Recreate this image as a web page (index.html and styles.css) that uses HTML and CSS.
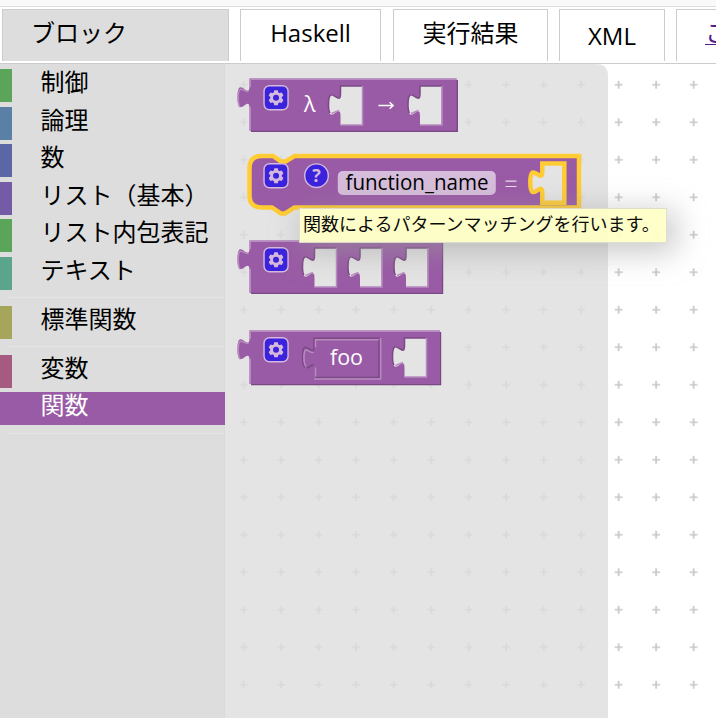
FILE: index.html
```html
<!DOCTYPE html>
<html lang="ja">
<head>
<meta charset="utf-8">
<title>ブロック</title>
<link rel="stylesheet" href="styles.css">
</head>
<body>
<div class="topbar"></div>
<nav class="tabs">
  <div class="tab active"><span>ブロック</span></div>
  <div class="tab haskell"><span>Haskell</span></div>
  <div class="tab result"><span>実行結果</span></div>
  <div class="tab xml"><span>XML</span></div>
  <div class="tab help"><a href="#">こ</a></div>
</nav>
<main class="editor">
  <aside class="toolbox">
    <div class="row c1">制御</div>
    <div class="row c2">論理</div>
    <div class="row c3">数</div>
    <div class="row c4">リスト（基本）</div>
    <div class="row c5">リスト内包表記</div>
    <div class="row c6">テキスト</div>
    <div class="separator"></div>
    <div class="row c7">標準関数</div>
    <div class="separator"></div>
    <div class="row c8">変数</div>
    <div class="row selected">関数</div>
    <div class="separator"></div>
  </aside>
  <svg class="workspace" width="491" height="655" viewBox="225 63 491 655">
    <defs>
      <pattern id="grid" x="262.4" y="66" width="37.5" height="37.5" patternUnits="userSpaceOnUse">
        <path d="M14.75 18.75h8M18.75 14.75v8" stroke="#c8c8c8" stroke-width="1.7"/>
      </pattern>
      <g id="gear">
        <rect x=".75" y=".75" width="24" height="24" rx="5.5" fill="#3b22dd" stroke="#d5b9dc" stroke-width="1.4"/>
        <g fill="#d5b9dc">
          <path id="teeth" d="M11 5.2h3.5l.9 3.8h-5.3zM10.1 16.5h5.3l-.9 3.8H11z"/>
          <use href="#teeth" transform="rotate(60 12.75 12.75)"/>
          <use href="#teeth" transform="rotate(120 12.75 12.75)"/>
        </g>
        <circle cx="12.75" cy="12.75" r="4.4" fill="none" stroke="#d5b9dc" stroke-width="2.8"/>
      </g>
      <g id="socket">
        <path d="M0 0H21.5V39H0V30C0 15-12 42-12 18.75S0 22.5 0 7.5Z" fill="#e4e4e4"/>
        <path d="M21.5 0H0V7.5C0 22.5-12-4.5-12 18.75Q-12 25-10.5 27" class="dark"/>
        <path d="M22 0V39H0M-9 27.5L-1.5 24.5" class="light"/>
      </g>
      <path id="tab-edge" d="M-1 12.5C-4 15.5-11.3 3-11.3 18.75Q-11.3 26-9.5 28.5" class="light"/>
    </defs>
    <rect x="225" y="63" width="491" height="655" fill="#fff"/>
    <rect x="225" y="63" width="491" height="655" fill="url(#grid)"/>
    <path d="M225 64H596Q608 64 608 76V718H225Z" fill="#ddd" fill-opacity=".8"/>
    <path d="M225 63.5H716" stroke="#ccc"/>

    <g>
      <path class="shadow" d="M251 80H458V132H251Z"/>
      <path class="block" d="M249.5 78.5H456.5V130.7H249.5V108.5C249.5 93.5 237.5 120.5 237.5 97.25S249.5 101 249.5 86Z"/>
      <path class="light" d="M456.5 79.2H250.2V87M250.2 107V130.5"/>
      <use href="#tab-edge" x="249.5" y="78.5"/>
      <use href="#gear" x="263.3" y="85"/>
      <text x="304" y="111.5" class="label lambda">λ</text>
      <use href="#socket" x="340.5" y="86"/>
      <path class="arrow" d="M378.5 105.5H393M389.6 102.2L393.2 105.5L389.6 108.8"/>
      <use href="#socket" x="420" y="86"/>
    </g>

    <g>
      <path class="block selected-block" d="M249.5 168Q249.5 156 261.5 156H273L281 161.5H285.5L294.5 156H579V207.5H294.5L285 213.5H281L272 207.5H261.5Q249.5 207.5 249.5 195.5Z"/>
      <use href="#gear" x="263.3" y="163"/>
      <circle cx="316.5" cy="175.7" r="11.8" fill="#3b22dd" stroke="#d5b9dc" stroke-width="1.4"/>
      <text x="312.2" y="182" class="question">?</text>
      <rect x="337.8" y="171" width="158" height="24" rx="5" fill="#d6bddb"/>
      <text x="345.5" y="189.5" class="label field" textLength="143" lengthAdjust="spacingAndGlyphs">function_name</text>
      <path d="M505.5 181.1H516.5M505.5 186.5H516.5" stroke="#e9dded" stroke-width="1.2"/>
      <path d="M542.3 163.5H564.3V202.7H542.3V193.5C542.3 178.5 530.3 205.5 530.3 182.25S542.3 186 542.3 171Z" fill="#e4e4e4" stroke="#fc3" stroke-width="4.5"/>
    </g>

    <g>
      <path class="shadow" d="M251 242H443.2V294H251Z"/>
      <path class="block" d="M249.5 240.5H442V292.7H249.5V270.5C249.5 255.5 237.5 282.5 237.5 259.25S249.5 263 249.5 248Z"/>
      <path class="light" d="M442 241.2H250.2V249M250.2 269V292.5"/>
      <use href="#tab-edge" x="249.5" y="240.5"/>
      <use href="#gear" x="263.3" y="247"/>
      <use href="#socket" x="314.5" y="248"/>
      <use href="#socket" x="360" y="248"/>
      <use href="#socket" x="406" y="248"/>
    </g>

    <g>
      <path class="shadow" d="M251 332H441.2V385.2H251Z"/>
      <path class="block" d="M249.5 330.5H440V384H249.5V360.5C249.5 345.5 237.5 372.5 237.5 349.25S249.5 353 249.5 338Z"/>
      <path class="light" d="M440 331.2H250.2V339M250.2 359V383.5"/>
      <use href="#tab-edge" x="249.5" y="330.5"/>
      <use href="#gear" x="263.3" y="337"/>
      <path class="dark" d="M379.5 338.2H314V346C314 361 302.5 334 302.5 357Q302.5 365 305 367.5M307 368L313.5 364.5M379 340V377.5H316"/>
      <path class="light" d="M378.5 339.7H315.5V347.5M315.5 367.5V376.5M380.7 338V379H314M313.5 352C310 355.5 304 342 304 358Q304 364 306 366.5"/>
      <text x="330" y="364.8" class="label" textLength="33" lengthAdjust="spacingAndGlyphs">foo</text>
      <use href="#socket" x="404.5" y="338"/>
    </g>
  </svg>
</main>
<div class="tooltip"><span>関数によるパターンマッチングを行います。</span></div>
</body>
</html>
```

FILE: styles.css
```css
* { box-sizing: border-box; }
body {
  margin: 0;
  width: 716px;
  height: 718px;
  overflow: hidden;
  position: relative;
  background: #fff;
  color: #000;
  font-family: "Open Sans", "Noto Sans CJK JP", sans-serif;
  font-size: 24px;
}
.topbar { height: 7px; background: #f9f9f9; border-bottom: 1px solid #ddd; }
.tabs { display: flex; height: 56px; padding: 2px 0 2px 2px; }
.tab {
  flex: none;
  height: 52px;
  border: 1px solid #ccc;
  border-bottom: 0;
  text-align: center;
  line-height: 45px;
  white-space: nowrap;
  margin-right: 11px;
}
.tab.active { width: 227px; background: #ddd; text-align: left; padding-left: 28px; }
.tab.haskell { width: 141px; margin-right: 12px; }
.tab.result { width: 155px; }
.tab.xml { width: 106px; line-height: 52px; }
.tab.help {
  flex: 1;
  min-width: 0;
  margin-right: 0;
  border-right: 0;
  padding-left: 28px;
  overflow: hidden;
  text-align: left;
}
.tab a { color: #551a8b; text-decoration-thickness: 1px; text-underline-offset: 2px; }
.editor { display: flex; height: 655px; }
.toolbox { width: 225px; padding-top: 5px; background: #ddd; border-top: 1px solid #ccc; border-right: 1px solid #dadada; }
.row {
  height: 33px;
  margin-bottom: 4.5px;
  padding-left: 28.5px;
  border-left: 12px solid transparent;
  line-height: 25.5px;
  white-space: nowrap;
}
.c1, .c5 { border-color: #5ba55b; }
.c2 { border-color: #5b80a5; }
.c3 { border-color: #5b67a5; }
.c4 { border-color: #745ba5; }
.c6 { border-color: #5ba58c; }
.c7 { border-color: #a5a55b; }
.c8 { border-color: #a55b80; }
.selected { background: #995ba5; border-color: #995ba5; color: #fff; width: 225px; }
.separator { height: 1px; margin: 7.5px 0 7.5px 7px; background: #e5e5e5; }
.workspace { display: block; flex: none; }
.block { fill: #995ba5; }
.shadow { fill: #7a4984; }
.light { fill: none; stroke: #b88cc0; stroke-width: 1.5; }
.dark { fill: none; stroke: #7a4984; stroke-width: 1.5; }
.selected-block { stroke: #fc3; stroke-width: 4.5; }
.label { fill: #fff; font-size: 21.5px; }
.field { fill: #000; }
.question { fill: #d5b9dc; font-size: 18px; font-weight: 700; }
.arrow { fill: none; stroke: #fff; stroke-width: 1.4; }
.tooltip {
  position: absolute;
  left: 299px;
  top: 208px;
  width: 368px;
  height: 35px;
  padding-left: 3px;
  border: 1px solid #ddc;
  background: #ffffc7;
  opacity: .95;
  box-shadow: 6px 6px 30px 2px #9999;
  font-size: 18px;
  line-height: 31px;
  white-space: nowrap;
}
```
